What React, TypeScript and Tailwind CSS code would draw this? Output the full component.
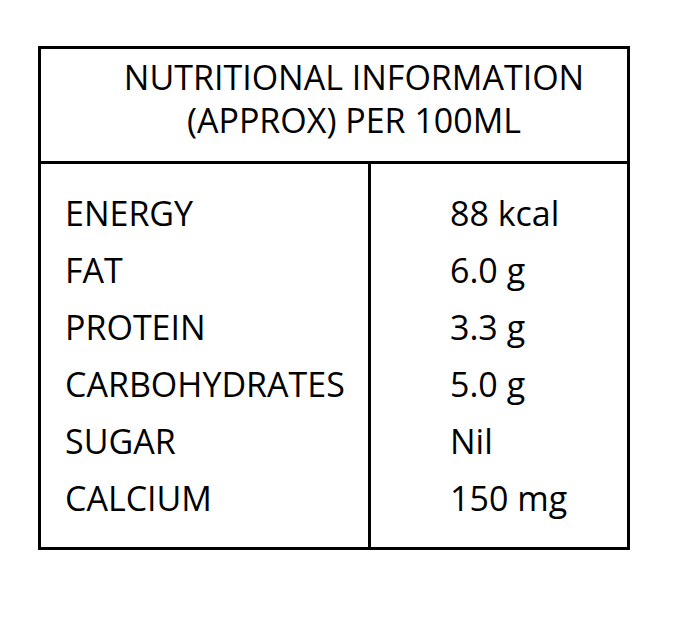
export default function App() {
  const rows = [
    ["ENERGY", "88 kcal"],
    ["FAT", "6.0 g"],
    ["PROTEIN", "3.3 g"],
    ["CARBOHYDRATES", "5.0 g"],
    ["SUGAR", "Nil"],
    ["CALCIUM", "150 mg"],
  ]

  return (
    <div className="min-h-[639px] w-[700px] bg-white pt-[46px] pl-[38px] font-medium text-black [font-family:'Open_Sans',sans-serif]">
      <div className="flex h-[504px] w-[592px] flex-col border-[3px] border-black">
        <div className="h-[115px] border-b-[3px] border-black pt-[7px] pl-[40px] text-center text-[34px] leading-[43px]">
          <div>NUTRITIONAL INFORMATION</div>
          <div>(APPROX) PER 100ML</div>
        </div>
        <div className="flex flex-1">
          <div className="w-[330px] border-r-[3px] border-black pt-[21px] pl-[24px] text-[34px] leading-[57px]">
            {rows.map(([label]) => (
              <div key={label}>{label}</div>
            ))}
          </div>
          <div className="flex-1 pt-[21px] pl-[79px] text-[34px] leading-[57px]">
            {rows.map(([label, value]) => (
              <div key={label}>{value}</div>
            ))}
          </div>
        </div>
      </div>
    </div>
  )
}
